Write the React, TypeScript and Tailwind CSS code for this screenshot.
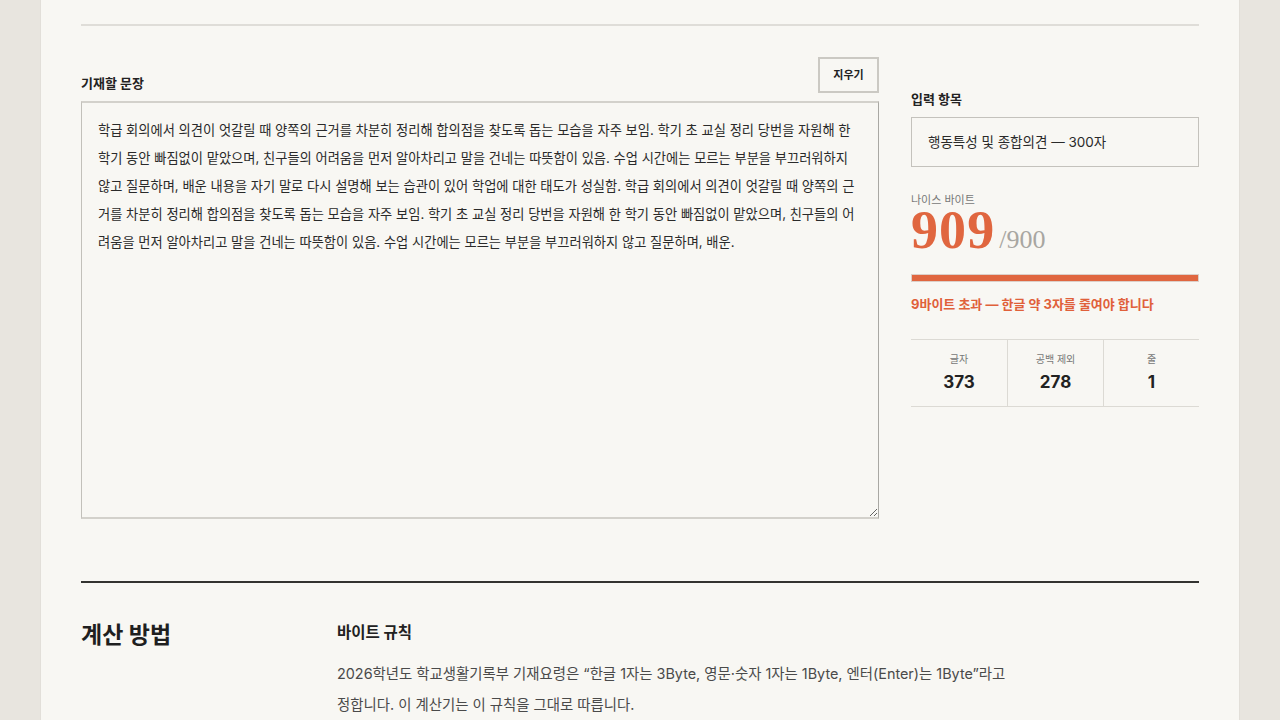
import React from "react";

const sampleText =
  "학급 회의에서 의견이 엇갈릴 때 양쪽의 근거를 차분히 정리해 합의점을 찾도록 돕는 모습을 자주 보임. 학기 초 교실 정리 당번을 자원해 한 학기 동안 빠짐없이 맡았으며, 친구들의 어려움을 먼저 알아차리고 말을 건네는 따뜻함이 있음. 수업 시간에는 모르는 부분을 부끄러워하지 않고 질문하며, 배운 내용을 자기 말로 다시 설명해 보는 습관이 있어 학업에 대한 태도가 성실함. 학급 회의에서 의견이 엇갈릴 때 양쪽의 근거를 차분히 정리해 합의점을 찾도록 돕는 모습을 자주 보임. 학기 초 교실 정리 당번을 자원해 한 학기 동안 빠짐없이 맡았으며, 친구들의 어려움을 먼저 알아차리고 말을 건네는 따뜻함이 있음. 수업 시간에는 모르는 부분을 부끄러워하지 않고 질문하며, 배운.";

const stats = [
  { label: "글자", value: "373" },
  { label: "공백 제외", value: "278" },
  { label: "줄", value: "1" },
];

export default function App() {
  return (
    <div className="min-h-screen bg-[#e8e5df] font-['Inter','Noto_Sans_CJK_KR',sans-serif] text-[#222]">
      <main className="mx-auto w-[1200px] min-h-screen bg-[#f8f7f3] border-x border-[#e2dfd9] px-10 pt-[24px] pb-10">
        {/* header rule */}
        <div className="h-[2px] bg-[#dfddd8]" />

        {/* editor + counter */}
        <section className="mt-[31px] grid grid-cols-[798px_288px] gap-x-8">
          <div>
            <div className="flex items-end justify-between">
              <label className="text-[13px] font-bold leading-5">기재할 문장</label>
              <button className="h-9 w-[61px] border-2 border-[#cbc9c3] bg-[#f8f7f3] text-[11px] font-bold text-[#222]">
                지우기
              </button>
            </div>
            <textarea
              defaultValue={sampleText}
              spellCheck={false}
              className="mt-2 block h-[418px] w-full resize-y border border-[#c2c0ba] border-t-2 border-t-[#d3d1cb] border-b-2 border-b-[#d3d1cb] border-r-[#a9a8a3] bg-[#f8f7f3] px-4 pt-[13px] text-[13.25px] leading-[28px] text-[#2a2a2a] outline-none [word-break:break-all]"
            />
          </div>

          <aside className="pt-[32px]">
            <div className="text-[13px] font-bold leading-5">입력 항목</div>
            <div className="mt-2 flex h-[50px] items-center border border-[#c4c2bc] px-4 text-[13.5px] text-[#2a2a2a]">
              행동특성 및 종합의견 — 300자
            </div>

            <div className="mt-[26px] text-[11px] leading-[14px] text-[#777]">나이스 바이트</div>
            <div className="flex h-[46px] items-baseline leading-[46px]">
              <span className="font-['Liberation_Serif',serif] text-[54px] font-bold tracking-[0.02em] text-[#e0663f]">
                909
              </span>
              <span className="ml-1 font-['Liberation_Serif',serif] text-[26px] text-[#a8a6a1]">/900</span>
            </div>

            <div className="mt-[21px] h-2 border border-[#dccfc8] bg-[#e0663f]" />

            <div className="mt-3 text-[13px] font-bold leading-5 text-[#e0603a]">
              9바이트 초과 — 한글 약 3자를 줄여야 합니다
            </div>

            <div className="mt-[25px] grid grid-cols-3 border-y border-[#dcdad4]">
              {stats.map((s, i) => (
                <div
                  key={s.label}
                  className={`flex flex-col items-center pt-[12px] pb-[13px] ${i > 0 ? "border-l border-[#dcdad4]" : ""}`}
                >
                  <span className="text-[10px] leading-[14px] text-[#777]">{s.label}</span>
                  <span className="mt-[5px] text-[17px] font-bold leading-[22px] text-[#222]">{s.value}</span>
                </div>
              ))}
            </div>
          </aside>
        </section>

        {/* method */}
        <div className="mt-[62px] h-[2px] bg-[#333330]" />
        <section className="mt-[37px] grid grid-cols-[256px_1fr]">
          <h2 className="text-[23px] font-bold leading-[30px] text-[#1f1f1f]">계산 방법</h2>
          <div>
            <h3 className="mt-[2px] text-[15.5px] font-bold leading-[22px]">바이트 규칙</h3>
            <p className="mt-[14px] max-w-[680px] text-[14.4px] leading-[31px] text-[#4a4a4a]">
              2026학년도 학교생활기록부 기재요령은 “한글 1자는 3Byte, 영문·숫자 1자는 1Byte, 엔터(Enter)는 1Byte”라고 정합니다. 이 계산기는 이 규칙을 그대로 따릅니다.
            </p>
          </div>
        </section>
      </main>
    </div>
  );
}
